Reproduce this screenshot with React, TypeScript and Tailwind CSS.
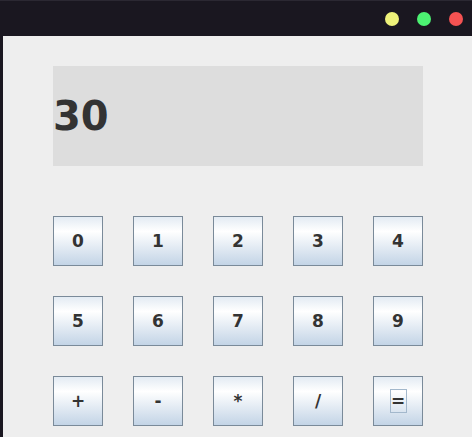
import React from "react";

const rows = [
  ["0", "1", "2", "3", "4"],
  ["5", "6", "7", "8", "9"],
  ["+", "-", "*", "/", "="],
];

function Btn({ label }: { label: string }) {
  return (
    <div className="w-[50px] h-[50px] border border-[#7a8a99] bg-[linear-gradient(to_bottom,#e3ebf3_0%,#ffffff_30%,#c3d4e6_100%)] flex items-center justify-center">
      {label === "=" ? (
        <span className="w-[17px] h-[24px] border border-[#a3b8cc] flex items-center justify-center text-[17px] font-bold text-[#333333] leading-none">
          =
        </span>
      ) : (
        <span className="text-[17px] font-bold text-[#333333] leading-none">{label}</span>
      )}
    </div>
  );
}

export default function App() {
  return (
    <div
      className="w-[472px] h-[437px] bg-[#1a1720] flex flex-col overflow-hidden"
      style={{ fontFamily: '"DejaVu Sans", sans-serif' }}
    >
      <div className="h-[36px] border-t border-[#2b2832] flex items-center justify-end pr-[9px] gap-[18px] shrink-0">
        <div className="w-[14px] h-[14px] rounded-full bg-[#eef27a]" />
        <div className="w-[14px] h-[14px] rounded-full bg-[#4cf272]" />
        <div className="w-[14px] h-[14px] rounded-full bg-[#f55252]" />
      </div>
      <div className="flex-1 ml-[3px] bg-[#eeeeee] pt-[30px] pl-[50px]">
        <div className="w-[370px] h-[100px] bg-[#dddddd] flex items-center pl-[0px]">
          <span className="text-[40px] font-bold text-[#333333] leading-none">30</span>
        </div>
        <div className="mt-[50px] flex flex-col gap-[30px]">
          {rows.map((r, i) => (
            <div key={i} className="flex gap-[30px]">
              {r.map((l) => (
                <Btn key={l} label={l} />
              ))}
            </div>
          ))}
        </div>
      </div>
    </div>
  );
}
